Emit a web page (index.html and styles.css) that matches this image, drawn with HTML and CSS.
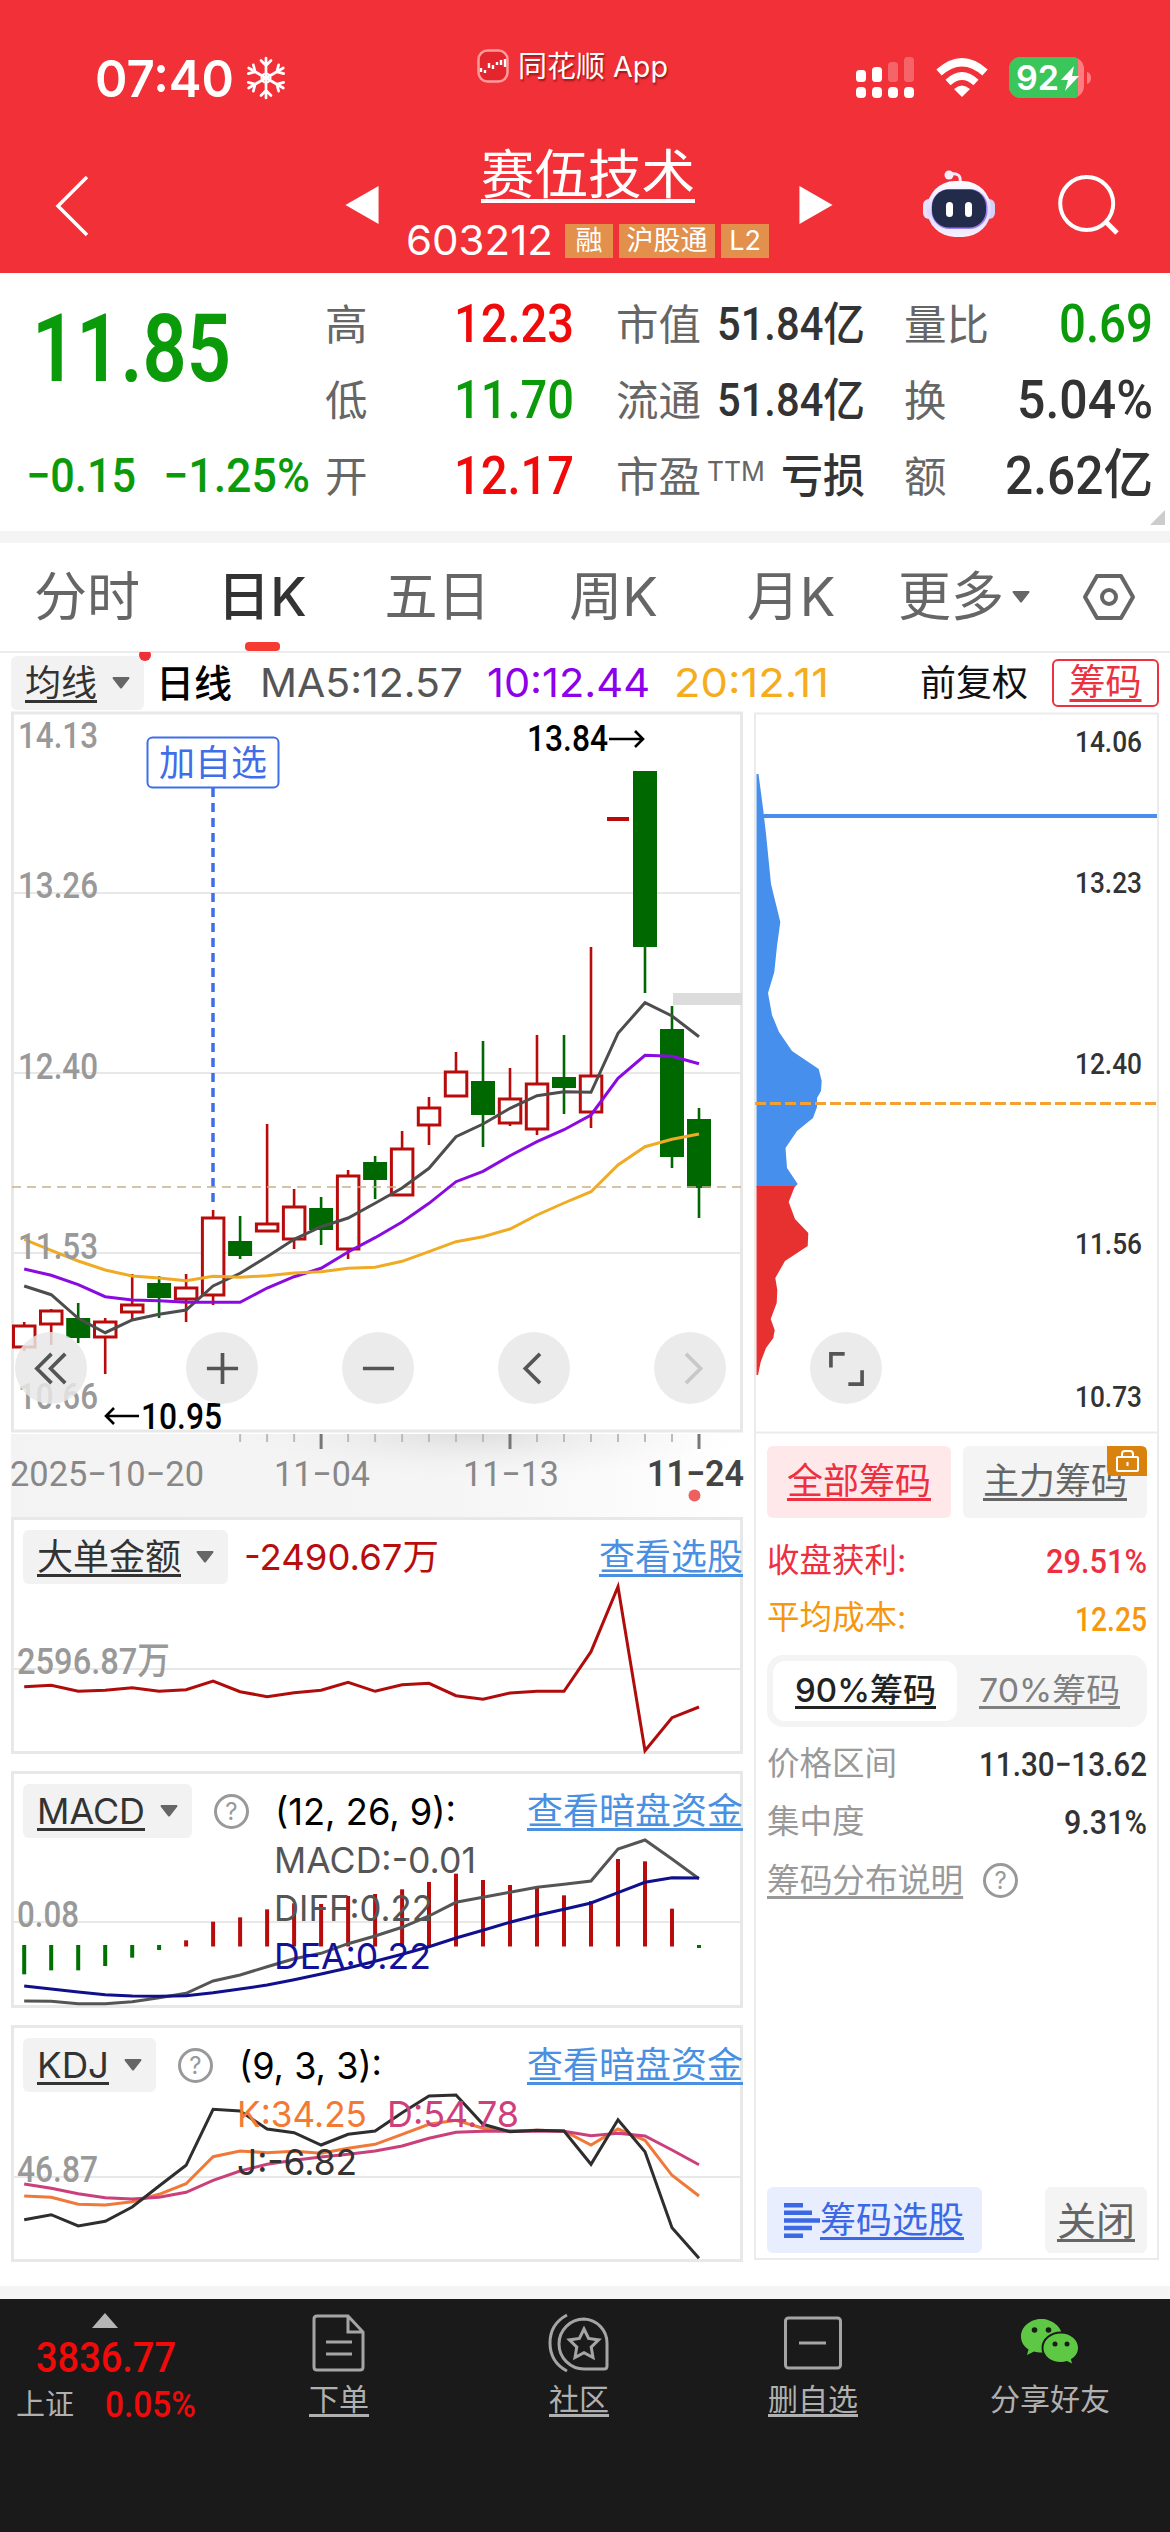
FILE: index.html
```html
<!DOCTYPE html>
<html lang="zh-CN">
<head>
<meta charset="utf-8">
<title>赛伍技术 603212</title>
<link rel="stylesheet" href="styles.css">
</head>
<body>
<header class="top">
  <div class="status">
    <span class="time fit" data-w="139">07:40</span>
    <svg class="snow" width="40" height="44" viewBox="-20 -22 40 44"><g id="flake" fill="none" stroke="#fff" stroke-width="2.700" stroke-linecap="round"></g></svg>
    <div class="brand">
      <svg width="32" height="34" viewBox="0 0 32 34"><rect x="1.5" y="1.5" width="29" height="31" rx="9" fill="#e3262d" stroke="#ff9a9a" stroke-width="2.5"/><path d="M4 19v4M8 21v3M12 14v5M16 16v4M20 13v3M24 11v5M28 10v8" stroke="#fff" stroke-width="2.4"/></svg>
      <span>同花顺</span><span class="fit" data-w="55">App</span>
    </div>
    <svg class="signal" width="58" height="42" viewBox="856 57 58 42" fill="#fff"><rect x="856" y="70" width="10" height="12" rx="3.5"/><rect x="872" y="67" width="10" height="15" rx="3.5"/><rect x="888" y="62" width="10" height="20" rx="3.5" opacity=".25"/><rect x="904" y="57" width="10" height="25" rx="3.5" opacity=".25"/><rect x="856" y="87" width="10" height="11" rx="4"/><rect x="872" y="87" width="10" height="11" rx="4"/><rect x="888" y="87" width="10" height="11" rx="4"/><rect x="904" y="87" width="10" height="11" rx="4"/></svg>
    <svg class="wifi" width="52" height="38" viewBox="0 0 52 38" fill="none" stroke="#fff"><path d="M3 13.5Q26-7 49 13.500" stroke-width="8"/><path d="M12 23.500Q26 10.500 40 23.500" stroke-width="7.500"/><path d="M18 30Q26 23 34 30L26 38Z" fill="#fff" stroke="none"/></svg>
    <svg class="battery" width="83" height="42" viewBox="1009 57 83 42"><defs><clipPath id="bat"><rect x="1009" y="57" width="75" height="41" rx="12"/></clipPath></defs><g clip-path="url(#bat)"><rect x="1009" y="57" width="75" height="41" fill="#ff7d80"/><rect x="1009" y="57" width="69" height="41" fill="#3bc65b"/></g><path d="M1087 72q4 1 4 6t-4 6z" fill="#ff7d80"/><text x="1016" y="90" class="bat-text" textLength="43" lengthAdjust="spacingAndGlyphs">92</text><path d="M1074 66l-13 14h7l-3 11 14-15h-7z" fill="#fff"/></svg>
  </div>
  <nav class="nav">
    <svg class="back" width="36" height="64" viewBox="0 0 36 64"><path d="M33 3L4 32 33 61" fill="none" stroke="#fff" stroke-width="3.5"/></svg>
    <svg class="prev" width="34" height="38" viewBox="0 0 34 39"><path d="M34 0v39L0 19.500z" fill="#fff"/></svg>
    <div class="stock">
      <h1>赛伍技术</h1>
      <div class="code"><span class="fit" data-w="147">603212</span><i>融</i><i class="wide">沪股通</i><i>L2</i></div>
    </div>
    <svg class="next" width="34" height="38" viewBox="0 0 34 39"><path d="M0 0v39L34 19.500z" fill="#fff"/></svg>
    <svg class="robot" width="74" height="68" viewBox="0 0 74 68"><defs><linearGradient id="shell" x1="0" y1="0" x2="0" y2="1"><stop offset="0" stop-color="#fff"/><stop offset=".55" stop-color="#ded8ff"/><stop offset="1" stop-color="#f6f2ff"/></linearGradient></defs><path d="M28 4q12-2 10 9" fill="none" stroke="#f1e8fb" stroke-width="3"/><circle cx="27" cy="5" r="4.500" fill="#f6eefb"/><rect x="1" y="29" width="12" height="20" rx="6" fill="#e7e2fa"/><rect x="61" y="29" width="12" height="20" rx="6" fill="#d6d0f8"/><rect x="5" y="11" width="64" height="56" rx="28" fill="url(#shell)"/><rect x="9.500" y="19" width="56" height="40" rx="18" fill="#9a7cf2"/><rect x="10" y="19.500" width="54" height="38" rx="17" fill="#222b49"/><rect x="24" y="32" width="7" height="15" rx="3.500" fill="#fff"/><rect x="43" y="32" width="7" height="15" rx="3.500" fill="#fff"/></svg>
    <svg class="find" width="64" height="62" viewBox="1055 175 64 62" fill="none" stroke="#fff" stroke-width="4"><circle cx="1084.700" cy="204.500" r="26.500"/><path d="M1103 222L1115 234" stroke-width="5"/></svg>
  </nav>
</header>

<section class="quote">
  <div class="price">
    <div class="last"><span class="fit" data-w="199">11.85</span></div>
    <div class="chg"><span class="fit" data-w="110">−0.15</span><span class="fit" data-w="147">−1.25%</span></div>
  </div>
  <dl>
    <div><dt>高</dt><dd class="up fit" data-w="120">12.23</dd></div>
    <div><dt>低</dt><dd class="down fit" data-w="120">11.70</dd></div>
    <div><dt>开</dt><dd class="up fit" data-w="120">12.17</dd></div>
  </dl>
  <dl class="small">
    <div><dt>市值</dt><dd class="fit" data-w="148">51.84亿</dd></div>
    <div><dt>流通</dt><dd class="fit" data-w="148">51.84亿</dd></div>
    <div><dt>市盈<sup class="fit" data-w="58">TTM</sup></dt><dd class="fit" data-w="84">亏损</dd></div>
  </dl>
  <dl>
    <div><dt>量比</dt><dd class="down fit" data-w="94">0.69</dd></div>
    <div><dt>换</dt><dd class="fit" data-w="136">5.04%</dd></div>
    <div><dt>额</dt><dd class="fit" data-w="148">2.62亿</dd></div>
  </dl>
  <svg class="corner" width="15" height="15" viewBox="0 0 15 15"><path d="M15 0v15H0z" fill="#ccc"/></svg>
</section>

<nav class="tabs">
  <a>分时</a><a class="on">日K</a><a>五日</a><a>周K</a><a>月K</a>
  <a class="more">更多<svg width="18" height="12" viewBox="0 0 18 12"><path d="M1 0h16q1 1 0 2l-7 9q-1 1-2 0L1 2Q0 1 1 0z" fill="#666"/></svg></a>
  <a><svg width="52" height="46" viewBox="0 0 52 46" fill="none" stroke="#666" stroke-width="4" stroke-linejoin="round"><path d="M14 2h24l12 21-12 21H14L2 23z"/><circle cx="26" cy="23" r="7"/></svg></a>
</nav>

<div class="ma">
  <span class="chip"><u>均线</u><svg width="18" height="12" viewBox="0 0 18 12"><path d="M1 0h16q1 1 0 2l-7 9q-1 1-2 0L1 2Q0 1 1 0z" fill="#666"/></svg></span>
  <i class="reddot"></i>
  <b class="period">日线</b>
  <span class="ma5 fit" data-w="203">MA5:12.57</span>
  <span class="ma10 fit" data-w="163">10:12.44</span>
  <span class="ma20 fit" data-w="155">20:12.11</span>
  <span class="adj">前复权</span>
  <span class="chipbtn"><u>筹码</u></span>
</div>

<main class="board">
  <div class="charts">
    <svg class="kline" id="kline" width="732" height="806" viewBox="11 712 732 806"></svg>
    <section class="sub">
      <svg id="flow" width="732" height="237" viewBox="11 1517 732 237"></svg>
      <div class="subhead">
        <span class="chip"><u>大单金额</u><svg width="18" height="12" viewBox="0 0 18 12"><path d="M1 0h16q1 1 0 2l-7 9q-1 1-2 0L1 2Q0 1 1 0z" fill="#666"/></svg></span>
        <span class="amount fit" data-w="195">-2490.67万</span>
        <a class="link">查看选股</a>
      </div>
    </section>
    <section class="sub">
      <svg id="macd" width="732" height="237" viewBox="11 1771 732 237"></svg>
      <div class="subhead">
        <span class="chip"><u class="fit" data-w="108">MACD</u><svg width="18" height="12" viewBox="0 0 18 12"><path d="M1 0h16q1 1 0 2l-7 9q-1 1-2 0L1 2Q0 1 1 0z" fill="#666"/></svg></span>
        <span class="help">?</span>
        <span class="param fit" data-w="181">(12, 26, 9):</span>
        <a class="link">查看暗盘资金</a>
      </div>
      <div class="readout macd">
        <p><span class="fit" data-w="202">MACD:-0.01</span></p>
        <p><span class="fit" data-w="159">DIFF:0.22</span></p>
        <p class="dea"><span class="fit" data-w="157">DEA:0.22</span></p>
      </div>
    </section>
    <section class="sub">
      <svg id="kdj" width="732" height="237" viewBox="11 2024 732 237"></svg>
      <div class="subhead">
        <span class="chip"><u class="fit" data-w="72">KDJ</u><svg width="18" height="12" viewBox="0 0 18 12"><path d="M1 0h16q1 1 0 2l-7 9q-1 1-2 0L1 2Q0 1 1 0z" fill="#666"/></svg></span>
        <span class="help">?</span>
        <span class="param fit" data-w="143">(9, 3, 3):</span>
        <a class="link">查看暗盘资金</a>
      </div>
      <div class="readout kdj">
        <p><span class="k fit" data-w="130">K:34.25</span><span class="d fit" data-w="132">D:54.78</span></p>
        <p class="j"><span class="fit" data-w="120">J:-6.82</span></p>
      </div>
    </section>
  </div>

  <aside class="chips">
    <svg id="profile" width="405" height="720" viewBox="754 713 405 720"></svg>
    <div class="chipinfo">
      <div class="pair">
        <span class="all"><u>全部筹码</u></span>
        <span class="mainforce"><u>主力筹码</u><svg class="lock" width="40" height="30" viewBox="0 0 40 30"><path d="M0 0h34q6 0 6 6v24H6q-6 0-6-6z" fill="#d9820e"/><g fill="none" stroke="#fff" stroke-width="2"><rect x="10" y="11" width="21" height="14" rx="1"/><path d="M15 11V8q0-3 3-3h5q3 0 3 3v3M20.500 16v4"/></g></svg></span>
      </div>
      <div class="kv red"><span>收盘获利:</span><span class="fit" data-w="101">29.51%</span></div>
      <div class="kv orange"><span>平均成本:</span><span class="fit" data-w="72">12.25</span></div>
      <div class="seg"><span class="on"><u class="fit" data-w="141">90%筹码</u></span><span><u class="fit" data-w="141">70%筹码</u></span></div>
      <div class="kv"><span>价格区间</span><b class="fit" data-w="168">11.30−13.62</b></div>
      <div class="kv"><span>集中度</span><b class="fit" data-w="83">9.31%</b></div>
      <div class="about"><u>筹码分布说明</u><span class="help">?</span></div>
      <div class="actions">
        <span class="pick"><svg width="36" height="35" viewBox="0 0 36 35" fill="#3b68e4"><path d="M0 0h19v4.500H0zM0 7.600h28v4.500H0zM0 15.200h36v4.500H0zM0 22.800h28v4.500H0zM0 30.400h19v4.500H0z"/></svg><u>筹码选股</u></span>
        <span class="close"><u>关闭</u></span>
      </div>
    </div>
  </aside>

  <div class="controls">
    <button><svg viewBox="0 0 36 36"><path d="M18 2L2 18 18 34M33 2L17 18 33 34"/></svg></button>
    <button><svg viewBox="0 0 36 36"><path d="M18 1v34M1 18h34"/></svg></button>
    <button><svg viewBox="0 0 36 36"><path d="M1 18h34"/></svg></button>
    <button><svg viewBox="0 0 36 36"><path d="M24 2L8 18 24 34"/></svg></button>
    <button class="off"><svg viewBox="0 0 36 36"><path d="M13 2L29 18 13 34"/></svg></button>
    <button><svg viewBox="0 0 36 36"><path d="M1 17V2h15M35 20v15H20"/></svg></button>
  </div>
</main>

<footer class="bar">
  <div class="index">
    <svg width="26" height="15" viewBox="0 0 26 15"><path d="M13 0l13 15H0z" fill="#b5b5b5"/></svg>
    <div class="pts"><span class="fit" data-w="140">3836.77</span></div>
    <div class="pct"><span>上证</span><b class="fit" data-w="91">0.05%</b></div>
  </div>
  <a><svg width="52" height="58" viewBox="0 0 52 58"><path d="M4 2h31l15 16v35q0 3-3 3H4q-3 0-3-3V5q0-3 3-3zM35 2v16h15M13 28h26M13 40h26"/></svg><u>下单</u></a>
  <a><svg width="60" height="58" viewBox="0 0 60 58"><path d="M35 5a25 25 0 1 0 0 50h20q3 0 3-3V29A24 24 0 0 0 35 5zM18 1Q1 10 1 29t17 28"/><path d="M35 15l4.600 9.500 10 1.400-7.400 7.200 1.800 10.400-9-4.900-9 4.900 1.800-10.400-7.400-7.200 10-1.400z"/></svg><u>社区</u></a>
  <a><svg width="58" height="54" viewBox="0 0 58 54"><rect x="1.500" y="2" width="55" height="50" rx="3"/><path d="M15 27h27"/></svg><u>删自选</u></a>
  <a><svg width="58" height="48" viewBox="0 0 58 48" class="wx"><path d="M20.500 1C9.500 1 0 8.500 0 18.500c0 5.500 3 10 7.500 13L6 37l7-3.500c2.500.8 5 1 7.500 1C31 34.500 41 27 41 18S31 1 20.500 1z"/><path d="M40 14.500c-10.500 0-18.500 7-18.500 15.500S29.500 45 40 45c2 0 4.200-.4 6-1l6.500 3.500-1.500-6c4.200-2.500 7-6.700 7-11.500 0-8.500-8-15.500-18-15.500z" stroke="#1a1a1a" stroke-width="2"/><g class="eyes"><circle cx="13.500" cy="12" r="2.800"/><circle cx="27.500" cy="12" r="2.800"/><circle cx="34" cy="26" r="2.500"/><circle cx="46" cy="26" r="2.500"/></g></svg><span>分享好友</span></a>
</footer>
<script src="script.js"></script>
</body>
</html>
```
FILE: styles.css
```css
* { box-sizing: border-box; margin: 0; padding: 0; }
body {
  width: 1170px; height: 2532px; overflow: hidden; background: #fff; color: #333;
  font-family: Inter, "Noto Sans CJK SC", sans-serif; font-size: 36px; line-height: 1;
}
svg { display: block; flex: none; overflow: visible; }
i { font-style: normal; }
u { text-decoration: underline; text-decoration-thickness: 3px; text-underline-offset: 4px; text-decoration-skip-ink: none; }
.fit { display: inline-block; flex: none; white-space: nowrap; transform-origin: 0 50%; }

.top { height: 273px; background: #f23037; color: #fff; }
.status { display: flex; align-items: center; height: 130px; padding: 26px 78px 0 95px; }
.time { font-size: 51px; font-weight: 600; }
.snow { margin-left: 12px; }
.brand { display: flex; align-items: center; gap: 8px; margin: -24px 0 0 191px; font-size: 29px; text-shadow: 1px 2px 2px rgba(90, 0, 0, .6); }
.brand svg { margin-right: 1px; }
.signal { margin-left: auto; }
.wifi { margin-left: 22px; }
.battery { margin-left: 21px; }
.bat-text { font: 600 34px Inter; fill: #fff; }
.nav { display: flex; align-items: center; height: 143px; padding-left: 54px; }
.back { margin-top: 8px; }
.prev { margin: 6px 0 0 255px; }
.stock { width: 364px; margin: 6px 0 0 27px; display: flex; flex-direction: column; align-items: center; }
h1 { font-size: 53.500px; font-weight: 400; height: 54px; text-decoration: underline; text-decoration-thickness: 4px; text-underline-offset: 5px; text-decoration-skip-ink: none; }
.code { display: flex; align-items: center; margin-top: 18px; height: 42px; font-size: 41px; font-weight: 400; width: 100%; }
.code i { width: 48px; height: 34px; margin-left: 6px; background: #e2904c; font-size: 27px; line-height: 34px; text-align: center; }
.code span + i { margin-left: 12px; }
.code .wide { width: 96px; }
.next { margin: 6px 0 0 29px; }
.robot { margin: 4px 0 0 89px; }
.find { margin: 7px 0 0 61px; }

.quote { position: relative; display: flex; height: 270px; padding-top: 13px; border-bottom: 12px solid #f4f4f4; }
.price { flex: none; width: 325px; padding: 16px 0 0 32px; color: #0a9a0a; font-family: Roboto; font-weight: 500; }
.last { height: 96px; font-size: 94px; font-weight: 600; }
.chg { display: flex; gap: 27px; margin: 54px 0 0 -6px; font-size: 48px; }
dl { flex: none; width: 249px; height: 228px; margin-right: 42px; }
dl:nth-of-type(2) { margin-right: 39px; }
dl > div { display: flex; justify-content: space-between; align-items: center; height: 76px; }
dt { font-size: 42.500px; color: #666; padding-top: 3px; white-space: nowrap; display: flex; }
dd { font: 500 54px/1 Roboto, "Noto Sans CJK SC"; }
.small dd { font-size: 46px; }
sup { font-size: 27px; margin: 2px 0 0 6px; line-height: 1; }
.up { color: #f00a0a; }
.down { color: #0a9a0a; }
.corner { position: absolute; right: 5px; bottom: 6px; }

.tabs { display: grid; grid-template-columns: 174px 176px 175px 177px 178px 168px 122px; height: 110px; border-bottom: 2px solid #ebebeb; }
.tabs a { position: relative; display: flex; align-items: center; justify-content: center; font-size: 53px; color: #666; }
.tabs .on { color: #333; font-weight: 500; }
.tabs .on::after { content: ""; position: absolute; left: 71px; bottom: 0; width: 35px; height: 9px; border-radius: 4px; background: #f53b32; }
.more { gap: 8px; }

.ma { position: relative; display: flex; align-items: center; height: 59px; padding: 0 11px; }
.chip { display: flex; align-items: center; gap: 15px; height: 54px; padding: 0 15px; background: #f2f2f2; border-radius: 6px; }
.ma .chip { padding: 0 14px; }
.reddot { position: absolute; left: 139px; top: -4px; width: 12px; height: 12px; border-radius: 50%; background: #ee2f35; clip-path: inset(3px 0 0); }
.period { font-size: 38px; font-weight: 500; color: #000; margin-left: 12px; width: 76px; white-space: nowrap; }
.ma5, .ma10, .ma20 { font-size: 40px; margin-left: 28px; color: #555; }
.ma10 { margin-left: 24px; color: #8c00ea; }
.ma20 { margin-left: 24px; color: #f5ad1b; }
.adj { margin-left: auto; color: #111; }
.chipbtn { height: 48px; width: 107px; margin-left: 24px; border: 2px solid #ee3140; border-radius: 6px; color: #ee3140; line-height: 42px; text-align: center; }

.board { position: relative; display: flex; height: 1574px; padding: 0 11px; }
.charts { width: 732px; margin-right: 11px; display: flex; flex-direction: column; }
.sub { position: relative; height: 237px; margin-bottom: 17px; }
.kline { margin-bottom: -1px; }
.sub > svg { position: absolute; inset: 0; }
.sub > div { position: relative; }
.subhead { display: flex; align-items: center; height: 54px; margin-left: 12px; top: 13px; }
.subhead .chip { padding: 0 14px; }
.amount { margin-left: 16px; color: #b80d0d; }
.help { width: 35px; height: 35px; border: 3px solid #999; border-radius: 50%; color: #999; font-size: 24px; line-height: 30px; text-align: center; }
.subhead .help { margin-left: 22px; }
.param { margin-left: 26px; font-size: 37px; color: #000; }
.link { margin-left: auto; color: #4a90e2; text-decoration: underline; text-decoration-thickness: 3px; text-underline-offset: 4px; text-decoration-skip-ink: none; }
.readout { padding: 11px 0 0 263px; color: #555; }
.readout p { height: 48px; line-height: 48px; }
.readout.kdj { padding-left: 226px; padding-top: 11px; }
.readout .dea { color: #111199; }
.k { color: #f27a35; }
.d { color: #cf3f7c; margin-left: 20px; }
.j { color: #333; }
.axis { font: 500 37px Roboto, "Noto Sans CJK SC"; fill: #999; }
.gridline { stroke: #e8e8e8; stroke-width: 2; }
.frame { fill: none; stroke: #e8e8e8; stroke-width: 3; }

.chips { position: relative; width: 405px; height: 1547px; margin-top: 1px; border: 2px solid #ebebeb; border-top: 0; }
.chips > svg { margin-left: -2px; }
.chipinfo { padding: 13px 10px 0 11px; height: 825px; display: flex; flex-direction: column; }
.pair { display: flex; justify-content: space-between; }
.pair > span { position: relative; width: 184px; height: 72px; border-radius: 6px; background: #f4f4f4; color: #666; text-align: center; line-height: 70px; }
.pair > .all { background: #ffe8ea; color: #ee2f40; }
.lock { position: absolute; right: 0; top: 0; }
.kv { display: flex; justify-content: space-between; align-items: center; height: 58px; font-size: 32.500px; color: #999; }
.pair + .kv { margin-top: 14px; }
.kv > :last-child { font: 500 34px/1 Roboto; color: #333; }
.kv.red, .kv.red > :last-child { color: #ee2f40; }
.kv.orange, .kv.orange > :last-child { color: #f5980f; }
.kv.orange { height: 57px; }
.seg { display: flex; height: 72px; margin: 8px 0; padding: 6px; border-radius: 16px; background: #f4f4f4; font-size: 33px; color: #808080; }
.seg span { width: 184px; height: 60px; line-height: 58px; padding-left: 22px; border-radius: 12px; }
.seg .on { background: #fff; color: #222; font-weight: 500; }
.about { display: flex; align-items: center; height: 58px; gap: 20px; font-size: 32.700px; color: #999; }
.actions { display: flex; justify-content: space-between; margin-top: auto; margin-bottom: 5px; }
.actions span { height: 66px; display: flex; align-items: center; border-radius: 6px; }
.pick { width: 215px; padding-left: 17px; background: #e8eefd; color: #3b68e4; }
.close { width: 102px; justify-content: center; background: #f4f4f4; color: #666; font-size: 39px; }

.controls { position: absolute; left: 15px; top: 620px; display: flex; gap: 84px; }
.controls button { width: 72px; height: 72px; border: 0; border-radius: 50%; background: rgba(232, 232, 232, .85); display: flex; align-items: center; justify-content: center; }
.controls button:first-child { margin-right: 15px; }
.controls svg { width: 33px; height: 33px; fill: none; stroke: #555; stroke-width: 4; }
.controls .off svg { stroke: #c8c8c8; }

.bar { display: flex; height: 247px; border-top: 13px solid #f4f4f4; background: #1a1a1a; color: #b0b0b0; font-size: 30px; }
.index { width: 212px; padding-top: 14px; }
.index svg { margin-left: 92px; }
.pts { margin: 9px 0 0 36px; font: 500 42px/1 Roboto; color: #f00a0a; }
.pct { display: flex; align-items: center; gap: 31px; margin: 7px 0 0 16px; font-size: 29px; height: 37px; }
.pct b { font: 500 37px/1 Roboto; color: #f00a0a; }
.bar a { width: 239px; display: flex; flex-direction: column; align-items: center; padding-top: 15px; }
.bar a svg { fill: none; stroke: #a5a5a5; stroke-width: 3; }
.bar a:nth-child(2) { width: 254px; }
.bar a:nth-child(3) { width: 226px; }
.bar a:nth-child(4) { width: 242px; }
.bar a:nth-child(5) { width: 232px; }
.bar a > :last-child { margin-top: 12px; }
.bar a:nth-child(4) svg { margin: 2px 0; }
.bar a svg.wx { fill: #5ec845; stroke: none; margin: 4px 0 6px; }
.wx .eyes { fill: #1a1a1a; }
```
FILE: script.js
```js
// Condenses a label to the column width given in data-w.
document.querySelectorAll('.fit').forEach(function (el) {
  var natural = el.getBoundingClientRect().width, w = +el.dataset.w;
  el.style.transform = 'scaleX(' + (w / natural).toFixed(4) + ')';
  el.style.marginRight = (w - natural).toFixed(2) + 'px';
});

var arm = '';
for (var a = 0; a < 6; a++) arm += '<path transform="rotate(' + a * 60 + ')" d="M0 0V-20M-5-17.500L0-12.500 5-17.500"/>';
document.getElementById('flake').innerHTML = arm + '<circle r="4.500" stroke-width="2"/>';

var STEP = 26.99, X0 = 24.2;
function x(i) { return +(X0 + STEP * i).toFixed(1); }
function line(ys, base, color, w) {
  return '<polyline fill="none" stroke="' + color + '" stroke-width="' + (w || 3) + '" points="' +
    ys.map(function (y, i) { return x(i) + ',' + (base + y / 3).toFixed(1); }).join(' ') + '"/>';
}
function label(t, lx, y, w, fill, size, weight) {
  return '<text class="axis" x="' + lx + '" y="' + y + '" textLength="' + w + '" lengthAdjust="spacingAndGlyphs" style="' +
    (fill ? 'fill:' + fill + ';' : '') + (size ? 'font-size:' + size + 'px;' : '') + (weight ? 'font-weight:' + weight : '') + '">' + t + '</text>';
}
function grid(y) { return '<path class="gridline" d="M12 ' + y + 'H742"/>'; }
function frame(y, h) { return '<rect class="frame" x="12.500" y="' + y + '" width="729" height="' + h + '"/>'; }
function rect(rx, y, w, h, f) { return '<rect x="' + rx + '" y="' + y + '" width="' + w + '" height="' + h + '" fill="' + f + '"/>'; }

// Daily candles: rising?, body top, body bottom, wick top, wick bottom
var candles = [
  [1,1326,1347,1322,1351],[1,1311,1324,1309,1345],[0,1318,1338,1303,1343],[1,1322,1337,1318,1374],
  [1,1305,1312,1274,1319],[0,1283,1298,1276,1318],[1,1288,1299,1274,1322],[1,1218,1295,1210,1305],
  [0,1241,1256,1216,1259],[1,1224,1231,1124,1231],[1,1207,1239,1189,1249],[0,1208,1230,1197,1245],
  [1,1176,1249,1170,1259],[0,1162,1180,1156,1199],[1,1149,1195,1131,1195],[1,1108,1125,1097,1145],
  [1,1072,1096,1052,1096],[0,1081,1115,1041,1147],[1,1099,1123,1068,1126],[1,1084,1129,1035,1135],
  [0,1077,1088,1035,1114],[1,1076,1112,947,1128],[1,818,818,818,818],[0,771,947,771,993],
  [0,1029,1157,1006,1168],[0,1119,1188,1108,1218]
];
var RED = '#b80c0c', GREEN = '#006800';
var k = '<defs><linearGradient id="fade"><stop offset="0" stop-color="#f3f3f3"/><stop offset=".6" stop-color="#f5f5f5"/><stop offset="1" stop-color="#fff"/></linearGradient>' +
  '<radialGradient id="shade" cx=".5" cy="0" r=".5" gradientTransform="translate(0 0) scale(1 1.900)"><stop offset="0" stop-color="#dedede"/><stop offset="1" stop-color="#f2f2f2" stop-opacity="0"/></radialGradient></defs>';
k += '<rect x="11" y="1434" width="732" height="84" fill="url(#fade)"/><rect x="210" y="1434" width="520" height="48" fill="url(#shade)"/>';
k += grid(893) + grid(1073) + grid(1253) + frame(713, 718);
k += rect(673, 993, 69, 12, '#dcdcdc');
k += '<path d="M213 788V1208" stroke="#3f6ee8" stroke-width="3.500" stroke-dasharray="9 6"/>';
candles.forEach(function (c, i) {
  var cx = x(i), col = c[0] ? RED : GREEN;
  if (c[1] === c[2]) { k += rect(607, 817, 22, 4, RED); return; }
  k += '<path stroke="' + col + '" stroke-width="2.600" d="M' + cx + ' ' + c[3] + 'V' + c[1] + 'M' + cx + ' ' + c[2] + 'V' + c[4] + '"/>';
  k += c[0]
    ? '<rect x="' + (cx - 10.7) + '" y="' + c[1] + '" width="21.500" height="' + (c[2] - c[1]) + '" fill="#fff" stroke="' + col + '" stroke-width="3"/>'
    : rect(cx - 12, c[1], 24, c[2] - c[1], col);
});
k += '<path d="M12 1187H742" stroke="#c9b18c" stroke-width="1.600" stroke-dasharray="9 6"/>';
k += line([858,884,955,998,960,943,930,858,820,770,718,680,654,610,564,505,410,372,325,287,275,277,100,8,48,110], 1000, '#4d4d4d');
k += line([807,826,854,890,900,902,907,907,907,864,830,805,756,713,666,610,545,514,467,425,389,345,235,166,169,191], 1000, '#8a0be0');
k += line([718,751,783,810,828,834,842,829,832,827,819,815,805,802,784,755,725,710,687,645,609,575,495,440,418,402], 1000, '#f0ab25');
k += label('14.13', 18, 748, 80) + label('13.26', 18, 898, 80) + label('12.40', 18, 1079, 80) + label('11.53', 18, 1259, 80) + label('10.66', 18, 1409, 80);
k += '<rect x="147.500" y="737.500" width="131" height="50" rx="5" fill="#fff" stroke="#3f6ee8" stroke-width="2"/>' +
  '<text x="159" y="776" font-size="36" fill="#3f6ee8">加自选</text>';
k += label('13.84', 527, 751, 81, '#000', 37) + '<path d="M609 739H642M635 731l8 8-8 8" fill="none" stroke="#000" stroke-width="2.600"/>';
k += label('10.95', 141, 1429, 81, '#000', 37) + '<path d="M139 1416H107M114 1408l-8 8 8 8" fill="none" stroke="#000" stroke-width="2.600"/>';
for (var i = 8; i < 26; i++) {
  var big = i % 7 === 4;
  k += '<path d="M' + x(i) + ' 1434V' + (big ? 1449 : 1442) + '" stroke="' + (big ? '#777' : '#bbb') + '" stroke-width="' + (big ? 3 : 2) + '"/>';
}
k += label('2025−10−20', 10, 1486, 194, '#888', 35, 400) + label('11−04', 274, 1486, 96, '#888', 35, 400) +
  label('11−13', 463, 1486, 96, '#888', 35, 400) + label('11−24', 647, 1486, 97, '#444', 36, 600);
k += '<circle cx="694.500" cy="1495.500" r="6" fill="#ee6060"/>';
document.getElementById('kline').innerHTML = k;

document.getElementById('flow').innerHTML = frame(1518.5, 234) + grid(1669) + label('2596.87万', 17, 1674, 153) +
  line([560,556,574,571,563,574,569,543,575,590,578,571,547,574,554,550,587,598,579,574,574,455,260,752,653,621], 1500, '#b00c0c');

var m = frame(1772.5, 234) + grid(1922) + label('0.08', 17, 1927, 62);
[1423,1411,1411,1398,1373,1350].forEach(function (v, i) { m += rect(x(i) - 2, 1945, 4, v / 3 + 1500 - 1945, '#007000'); });
[1321,1265,1252,1228,1210,1212,1188,1182,1168,1146,1121,1140,1155,1164,1186,1203,1077,1084,1226].forEach(function (v, i) {
  m += rect(x(i + 6) - 2, 1500 + v / 3, 4, 446.5 - v / 3, '#b80c0c');
});
m += rect(x(25) - 2, 1945, 4, 3, '#007000');
m += line([1503,1504,1511,1511,1505,1493,1480,1443,1425,1400,1376,1360,1331,1308,1282,1248,1207,1192,1177,1162,1153,1143,1047,1020,1077,1136], 1500, '#555');
m += line([1458,1467,1476,1484,1488,1489,1487,1478,1467,1455,1439,1422,1404,1384,1363,1340,1314,1291,1267,1246,1228,1209,1178,1147,1133,1134], 1500, '#10108c');
document.getElementById('macd').innerHTML = m;

document.getElementById('kdj').innerHTML = frame(2025.5, 234) + grid(2176) + label('46.87', 17, 2181, 81) +
  line([585,589,610,612,602,580,548,467,450,455,451,457,442,430,400,370,358,382,390,388,390,432,384,418,523,585], 2000, '#f07838') +
  line([549,562,578,590,594,589,574,538,510,490,478,468,460,450,435,412,394,391,391,390,391,404,397,405,447,491], 2000, '#cb3f7a') +
  line([656,641,675,661,618,555,493,325,330,384,395,432,400,390,335,285,282,370,392,388,390,490,356,452,680,772], 2000, '#2e2e2e');

// Cost distribution: holders above and below the closing price
var p = '<path d="M754 713.500H1158M754 1432.500H1158" stroke="#ebebeb" stroke-width="2"/>';
p += '<path fill="#468fec" d="M756.500 774H758.500L763 808 766 834 771 884 780.300 922 777 946 774.300 972 768 993 772 1015 779 1032 792 1051 818.700 1069 821.700 1081 821 1091 817 1098V1107L813 1118 797 1131 785.500 1148 787 1168 797.700 1184 795 1187H756.500z"/>';
p += '<path fill="#e73030" d="M756.500 1186H795L788.700 1202 795 1219 808.300 1233 807.700 1246 785 1261 775.300 1278 777.300 1290 776.700 1303 770.700 1319 774.700 1330 773.300 1338 766 1348 760.700 1362 758 1375H756.500z"/>';
p += '<path d="M763 816H1157" stroke="#468fec" stroke-width="4"/><path d="M755 1103.500H1157" stroke="#f5a032" stroke-width="3" stroke-dasharray="11 4"/>';
[['14.06', 752], ['13.23', 893], ['12.40', 1074], ['11.56', 1254], ['10.73', 1407]].forEach(function (r) { p += label(r[0], 1075, r[1], 67, '#333', 30); });
document.getElementById('profile').innerHTML = p;
```
